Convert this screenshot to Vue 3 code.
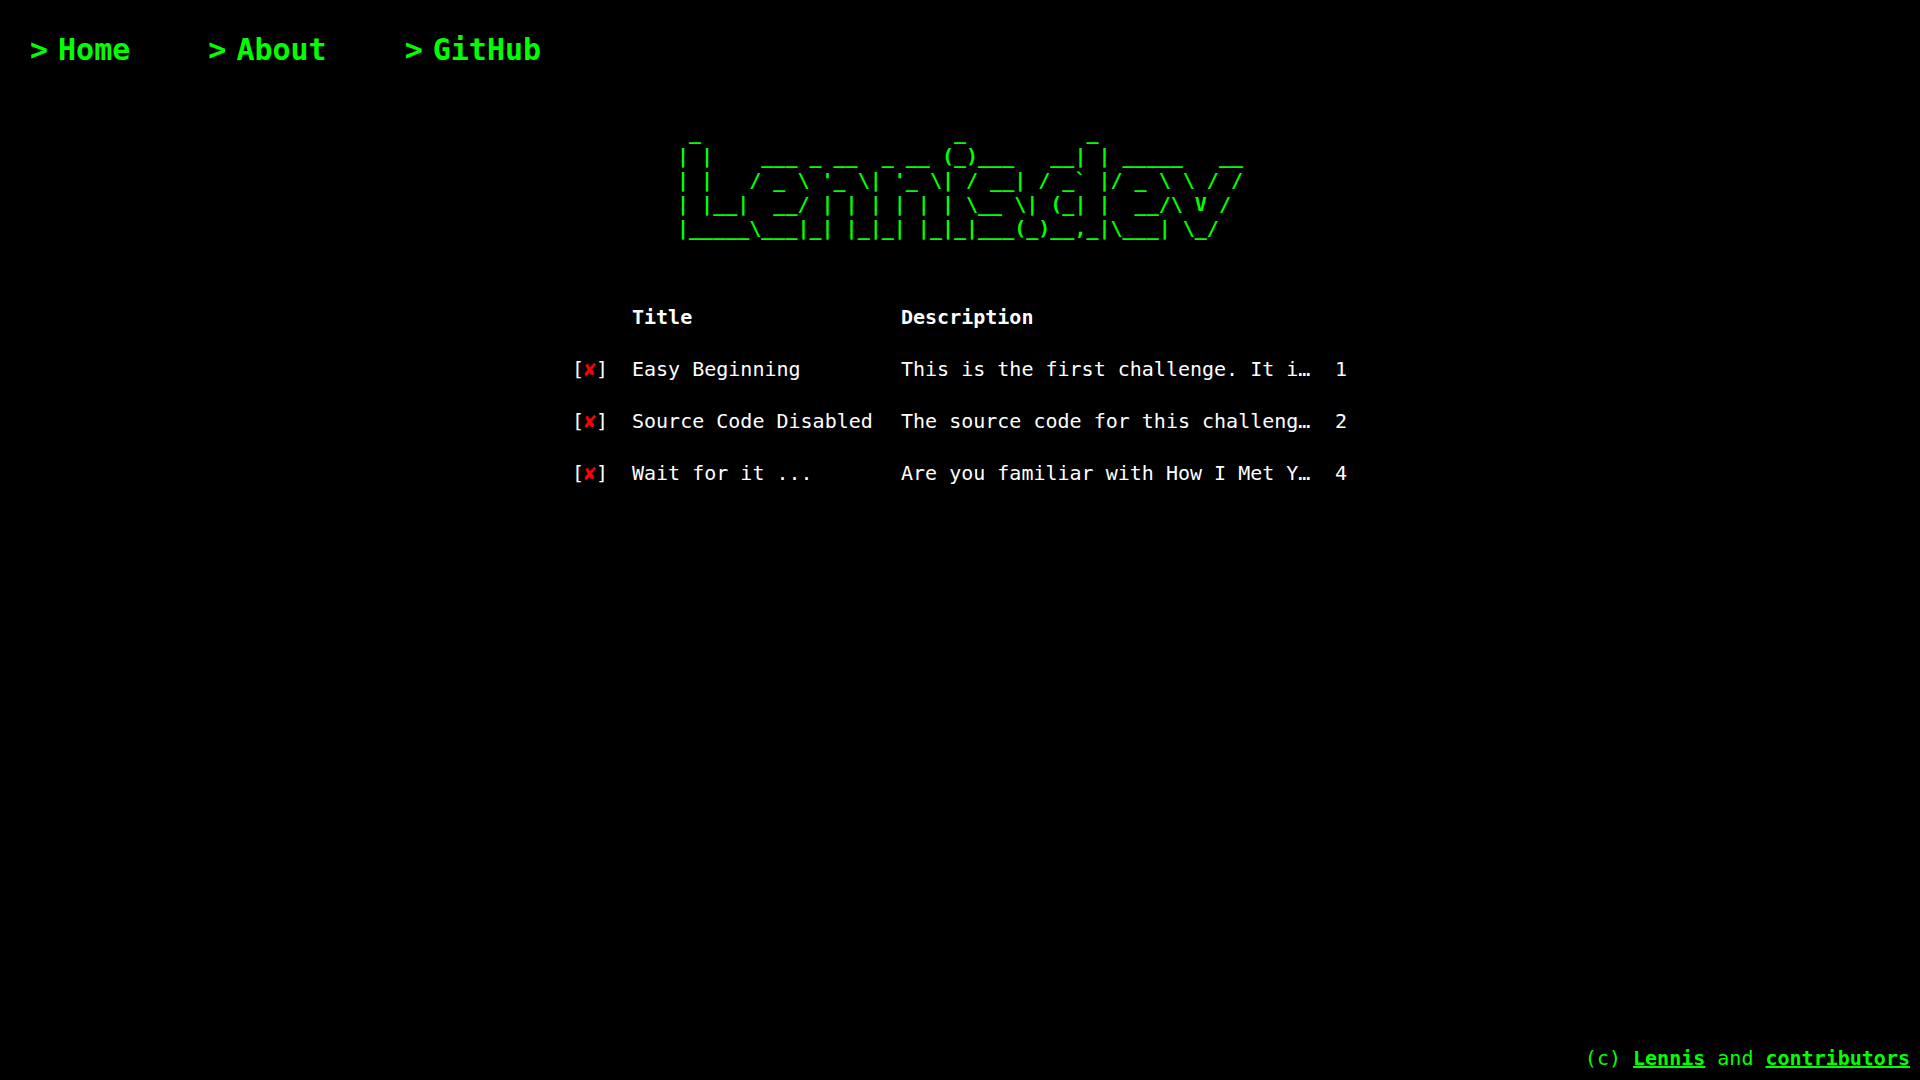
<script setup>
const links = ['Home', 'About', 'GitHub']

const banner = [
  ' _                     _          _',
  '| |    ___ _ __  _ __ (_)___   __| | _____   __',
  "| |   / _ \\ '_ \\| '_ \\| / __| / _` |/ _ \\ \\ / /",
  '| |__|  __/ | | | | | | \\__ \\| (_| |  __/\\ V /',
  '|_____\\___|_| |_|_| |_|_|___(_)__,_|\\___| \\_/'
].join('\n')

const challenges = [
  { title: 'Easy Beginning', description: 'This is the first challenge. It i…', level: 1 },
  { title: 'Source Code Disabled', description: 'The source code for this challeng…', level: 2 },
  { title: 'Wait for it ...', description: 'Are you familiar with How I Met Y…', level: 4 }
]
</script>

<template>
  <div class="page">
    <nav class="nav">
      <a v-for="link in links" :key="link" class="nav-link" href="#">
        <span>&gt;</span>
        <span>{{ link }}</span>
      </a>
    </nav>

    <main class="main">
      <pre class="banner">{{ banner }}</pre>

      <table class="challenges">
        <colgroup>
          <col class="col-status" />
          <col class="col-title" />
          <col />
          <col class="col-level" />
        </colgroup>
        <thead>
          <tr>
            <th></th>
            <th scope="col">Title</th>
            <th scope="col">Description</th>
            <th></th>
          </tr>
        </thead>
        <tbody>
          <tr v-for="challenge in challenges" :key="challenge.title">
            <td>[<span class="unsolved">✘</span>]</td>
            <td>{{ challenge.title }}</td>
            <td>{{ challenge.description }}</td>
            <td>{{ challenge.level }}</td>
          </tr>
        </tbody>
      </table>
    </main>

    <footer class="footer">
      (c) <a href="#">Lennis</a> and <a href="#">contributors</a>
    </footer>
  </div>
</template>

<style>
body {
  margin: 0;
  background: #000;
}
</style>

<style scoped>
.page {
  display: flex;
  flex-direction: column;
  min-height: 100vh;
  color: #fff;
  font-family: 'DejaVu Sans Mono', monospace;
  font-size: 20px;
  line-height: 24px;
}

.nav {
  display: flex;
  gap: 78px;
  padding: 32px 30px;
}

.nav-link {
  display: flex;
  gap: 10px;
  color: #0f0;
  font-size: 30px;
  font-weight: bold;
  line-height: 36px;
  text-decoration: none;
}

.main {
  display: flex;
  flex: 1;
  flex-direction: column;
  align-items: center;
}

.banner {
  margin: 20px 0 51px;
  color: #0f0;
  font-family: inherit;
  font-weight: bold;
}

.challenges {
  width: 100%;
  max-width: 800px;
  border-collapse: collapse;
  table-layout: fixed;
}

.col-status {
  width: 60px;
}

.col-title {
  width: 269px;
}

.col-level {
  width: 37px;
}

.challenges th,
.challenges td {
  padding: 14px 12px;
  text-align: left;
  white-space: nowrap;
}

.unsolved {
  color: #f00;
}

.footer {
  padding: 10px;
  color: #0f0;
  text-align: right;
}

.footer a {
  color: inherit;
  font-weight: bold;
}
</style>
